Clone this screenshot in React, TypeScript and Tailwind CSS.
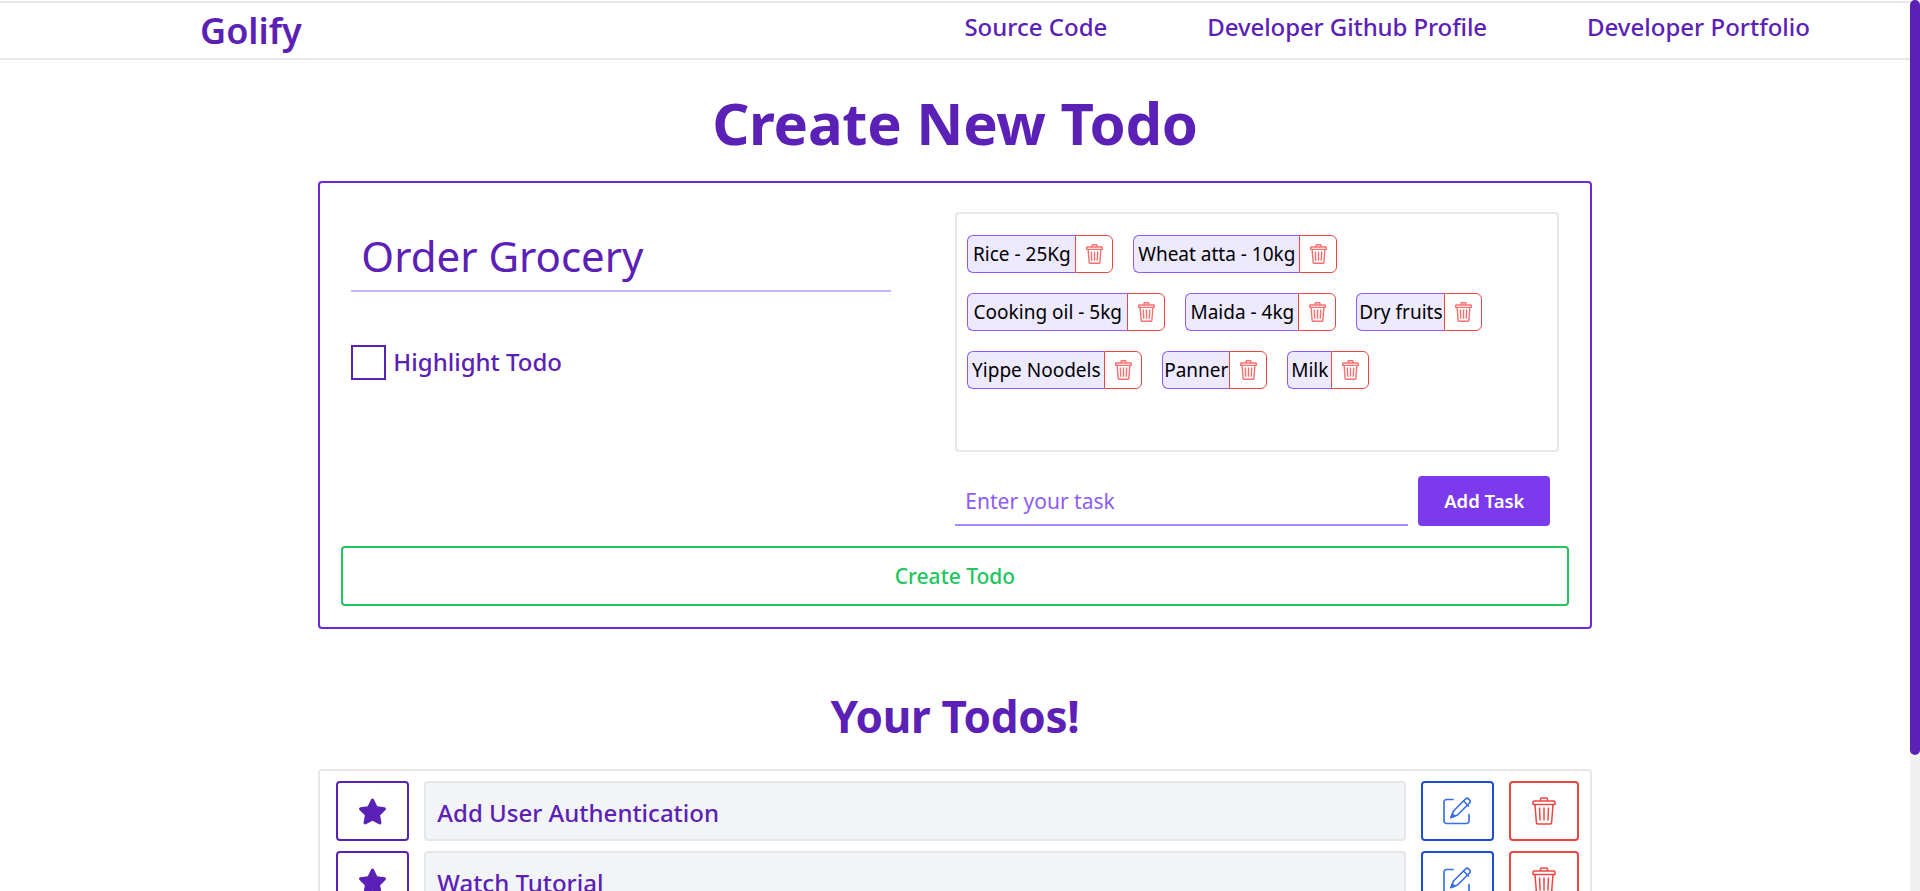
import React from "react";
import { FaStar } from "react-icons/fa";

const font = "font-['Noto_Sans',sans-serif]";

const tasks = [
  [
    { label: "Rice - 25Kg", width: "w-[108px]" },
    { label: "Wheat atta - 10kg", width: "w-[166px]" },
  ],
  [
    { label: "Cooking oil - 5kg", width: "w-[160px]" },
    { label: "Maida - 4kg", width: "w-[113px]" },
    { label: "Dry fruits", width: "w-[88px]" },
  ],
  [
    { label: "Yippe Noodels", width: "w-[137px]" },
    { label: "Panner", width: "w-[67px]" },
    { label: "Milk", width: "w-[44px]" },
  ],
];

const todos = ["Add User Authentication", "Watch Tutorial", "Complete Assignment"];

function TrashIcon({ className, strokeWidth = 1.5 }: { className?: string; strokeWidth?: number }) {
  return (
    <svg viewBox="0 0 24 28" fill="none" stroke="currentColor" strokeWidth={strokeWidth} strokeLinejoin="round" className={className}>
      <path d="M8.5 4V2a1 1 0 0 1 1-1h5a1 1 0 0 1 1 1v2" />
      <path d="M1 7.5V5a1 1 0 0 1 1-1h20a1 1 0 0 1 1 1v2.5z" />
      <path d="M3 7.5l1.4 18.2a1.5 1.5 0 0 0 1.5 1.3h12.2a1.5 1.5 0 0 0 1.5-1.3L21 7.5" />
      <path d="M7.5 10.5l.6 13M12 10.5v13M16.500 10.5l-.6 13" />
    </svg>
  );
}

function EditIcon({ className }: { className?: string }) {
  return (
    <svg viewBox="0 0 28 28" fill="none" stroke="currentColor" strokeWidth="1.7" strokeLinecap="round" strokeLinejoin="round" className={className}>
      <path d="M10 2.500H3.500A2.500 2.500 0 0 0 1 5v19a2.500 2.500 0 0 0 2.500 2.500h20A2.500 2.500 0 0 0 26 24v-6.500" />
      <path d="M22.500 2a2.200 2.200 0 0 1 3.100 0l.9.9a2.200 2.200 0 0 1 0 3.100L14.500 18l-6.500 2.500 2.500-6.500z" />
      <path d="M20.500 4l5 5" />
      <path d="M8 20.500l1.300-3.500 2.300 2.200z" fill="currentColor" />
    </svg>
  );
}

function TaskChip({ label, width }: { label: string; width: string }) {
  return (
    <div className="flex h-[38px]">
      <span className={`flex items-center justify-center rounded-l-md border border-r-0 border-[#8b5cf6] bg-[#ede9fe] text-[19px] text-black whitespace-nowrap ${width}`}>
        {label}
      </span>
      <button className="flex w-[38px] items-center justify-center rounded-r-md border border-[#ef4444] text-[#f87171]">
        <TrashIcon className="h-[20px] w-[17px]" strokeWidth={2} />
      </button>
    </div>
  );
}

function TodoRow({ title }: { title: string }) {
  return (
    <div className="flex h-[60px] items-stretch gap-[15px]">
      <button className="flex w-[73px] shrink-0 items-center justify-center rounded border-2 border-[#5b21b6] text-[#5b21b6]">
        <FaStar className="h-[29px] w-[29px]" />
      </button>
      <div className="flex flex-1 items-center rounded border-2 border-[#e5e7eb] bg-[#f3f4f6] pl-[11px] pt-[4px] text-2xl font-medium text-[#5b21b6]">
        {title}
      </div>
      <button className="flex w-[73px] shrink-0 items-center justify-center rounded border-2 border-[#1d4ed8] text-[#3b6fe8]">
        <EditIcon className="h-7 w-7" />
      </button>
      <button className="flex w-[70px] shrink-0 items-center justify-center rounded border-2 border-[#ef4444] text-[#ef4444]">
        <TrashIcon className="h-7 w-6" />
      </button>
    </div>
  );
}

export default function App() {
  return (
    <div className={`flex h-screen overflow-hidden bg-white ${font}`}>
      <div className="min-w-0 flex-1">
        <nav className="mt-px flex h-[59px] items-center justify-between border-y-2 border-[#e5e7eb] pl-[200px] pr-[100px] text-[#5b21b6]">
          <a className="text-4xl font-semibold">Golify</a>
          <div className="flex gap-[100px] pb-[7px] text-2xl font-medium">
            <a>Source Code</a>
            <a className="tracking-[-0.1px]">Developer Github Profile</a>
            <a>Developer Portfolio</a>
          </div>
        </nav>

        <h1 className="mt-[33px] text-center text-[58px] leading-[60px] font-bold tracking-[-0.3px] text-[#5b21b6]">
          Create New Todo
        </h1>

        <section className="mx-auto mt-[28px] h-[448px] w-2/3 rounded border-2 border-[#6d28d9] px-[21px] pt-[29px]">
          <div className="flex h-[334px] pl-[10px]">
            <div className="w-[540px] pt-[8px]">
              <input
                readOnly
                value="Order Grocery"
                className="h-[72px] w-full border-b-2 border-[#c4b5fd] px-[10px] text-[42px] text-[#5b21b6] outline-none"
              />
              <label className="mt-[53px] flex items-center gap-[7px] text-2xl font-medium text-[#5b21b6]">
                <span className="h-[35px] w-[35px] border-2 border-[#5b21b6]" />
                <span className="pb-[2px]">Highlight Todo</span>
              </label>
            </div>
            <div className="ml-[64px] w-[604px]">
              <div className="flex h-[240px] flex-col gap-5 rounded border-2 border-[#e5e7eb] px-[10px] pt-[21px]">
                {tasks.map((row) => (
                  <div key={row[0].label} className="flex gap-5">
                    {row.map((t) => (
                      <TaskChip key={t.label} label={t.label} width={t.width} />
                    ))}
                  </div>
                ))}
              </div>
              <div className="mt-6 flex gap-[10px]">
                <input
                  readOnly
                  placeholder="Enter your task"
                  className="h-[50px] w-[453px] border-b-2 border-[#a78bfa] px-[10px] pt-px text-[21px] placeholder:text-[#8b5cf6] outline-none"
                />
                <button className="h-[50px] w-[132px] rounded bg-[#7c3aed] text-[18.5px] font-semibold text-white">Add Task</button>
              </div>
            </div>
          </div>
          <button className="h-[60px] w-full rounded border-2 border-[#22c55e] pt-[2px] text-[21px] font-medium text-[#22c55e]">
            Create Todo
          </button>
        </section>

        <h2 className="mt-[63px] text-center text-[44px] leading-[48px] font-bold tracking-[-0.3px] text-[#5b21b6]">
          Your Todos!
        </h2>

        <section className="mx-auto mt-[29px] flex w-2/3 flex-col gap-[10px] rounded border-2 border-[#e5e7eb] py-[10px] pl-[16px] pr-[11px]">
          {todos.map((t) => (
            <TodoRow key={t} title={t} />
          ))}
        </section>
      </div>

      <aside className="w-[10px] shrink-0 bg-[#f0f0f0]">
        <div className="h-[755px] rounded-full bg-[#5b21b6]" />
      </aside>
    </div>
  );
}
